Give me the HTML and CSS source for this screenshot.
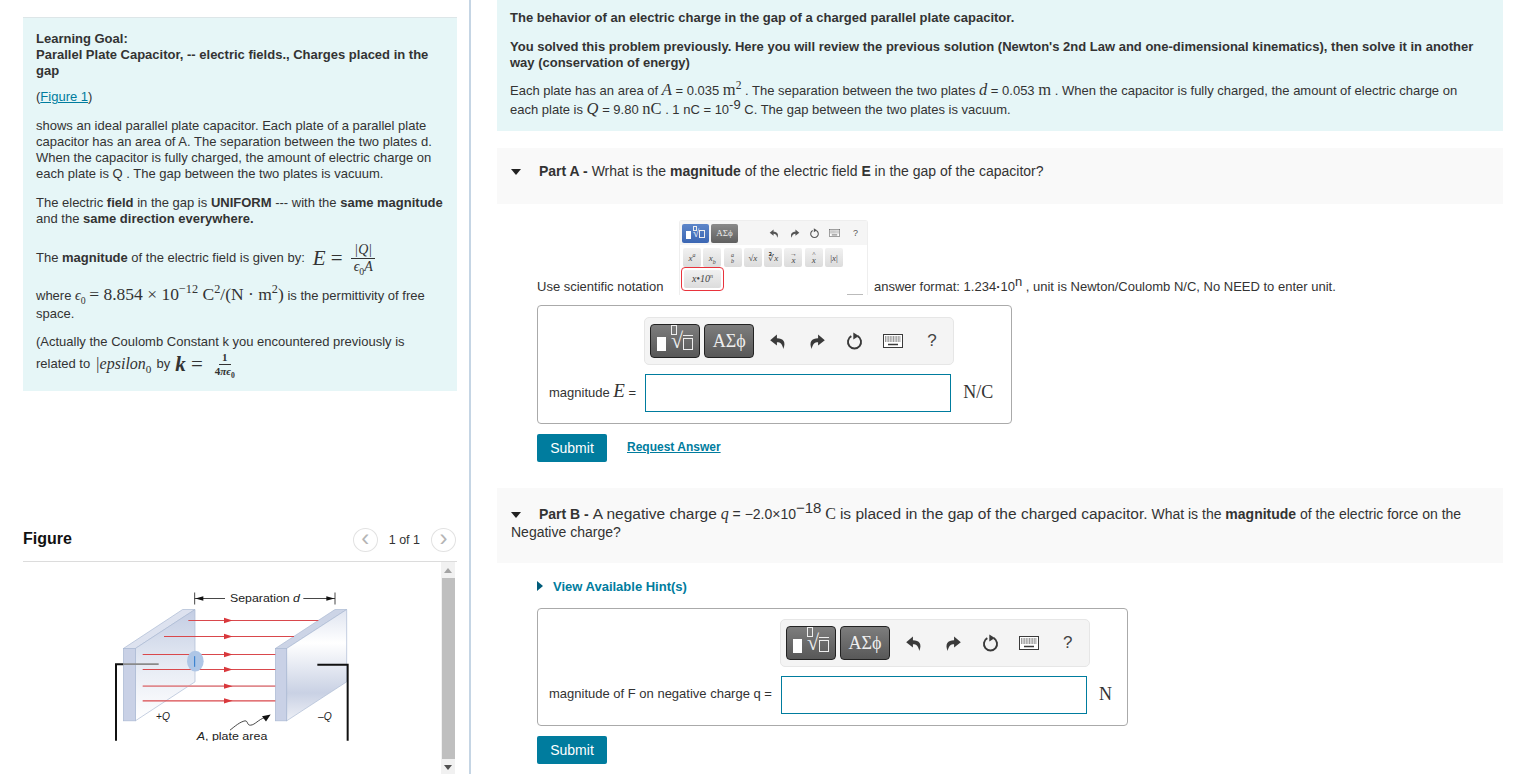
FILE: index.html
```html
<!DOCTYPE html>
<html lang="en">
<head>
    <meta charset="UTF-8" />
    <title>Parallel Plate Capacitor</title>
    <link rel="stylesheet" href="styles.css">
</head>
<body>
    <svg class="defs" width="0" height="0">
        <defs>
            <symbol id="i-undo" viewBox="0 0 24 24"><path d="M10 3 1.500 10.500 10 17V12.800C14.500 12.800 17 15 18 21.500 22 13 18 8 10 8Z"/></symbol>
            <symbol id="i-redo" viewBox="0 0 24 24"><path d="M14 3 22.500 10.500 14 17V12.800C9.500 12.800 7 15 6 21.500 2 13 6 8 14 8Z"/></symbol>
            <symbol id="i-reload" viewBox="0 0 24 24"><path d="M8 5.300A8.300 8.300 0 1 0 16 5.300" fill="none" stroke="currentColor" stroke-width="2.400"/><path d="M10.500 0.500 17.500 5 10.500 9.500Z"/></symbol>
            <symbol id="i-keys" viewBox="0 0 20 14"><rect x="0.500" y="0.500" width="19" height="13" fill="#fff" stroke="currentColor"/><path d="M2 3h16M2 5h16M2 7h16" stroke="currentColor" stroke-dasharray="1 .6"/><path d="M5 10.500h10" stroke="currentColor" stroke-width="1.500"/></symbol>
        </defs>
    </svg>

    <div class="page">
        <div class="left">
            <div class="goal">
                <p class="strong">Learning Goal:<br>Parallel Plate Capacitor, -- electric fields., Charges placed in the gap</p>
                <p class="figlink">(<a href="#">Figure 1</a>)</p>
                <p class="gap-l">shows an ideal parallel plate capacitor. Each plate of a parallel plate capacitor has an area of A. The separation between the two plates d. When the capacitor is fully charged, the amount of electric charge on each plate is Q . The gap between the two plates is vacuum.</p>
                <p class="gap-m">The electric <b>field</b> in the gap is <b>UNIFORM</b> --- with the <b>same magnitude</b> and the <b>same direction everywhere.</b></p>
                <div class="formula">
                    <span>The <b>magnitude</b> of the electric field is given by:</span>
                    <span class="math big"><i>E</i> =</span>
                    <span class="frac"><span class="num"><i>|Q|</i></span><span class="den"><i>ϵ</i><sub>0</sub><i>A</i></span></span>
                </div>
                <p class="where">where <span class="math"><i>ϵ</i><sub>0</sub></span> <span class="math mid">= 8.854 × 10<sup>−12</sup> C<sup>2</sup>/(N · m<sup>2</sup>)</span> is the permittivity of free space.</p>
                <p class="actual">(Actually the Coulomb Constant k you encountered previously is</p>
                <div class="related">
                    <span>related to</span>
                    <span class="math mid"><i>|epsilon</i><sub>0</sub></span>
                    <span>by</span>
                    <span class="math big"><b><i>k</i></b> =</span>
                    <span class="frac small"><span class="num"><b>1</b></span><span class="den"><b>4<i>πϵ</i><sub>0</sub></b></span></span>
                </div>
            </div>

            <div class="fighead">
                <h3>Figure</h3>
                <div class="pager">
                    <span class="circle">‹</span>
                    <span class="count">1 of 1</span>
                    <span class="circle">›</span>
                </div>
            </div>
            <div class="figbody">
                <svg class="capacitor" width="270" height="161" viewBox="0 0 810 482">
                    <defs>
                        <linearGradient id="pl" x1="0" y1="0" x2="0" y2="1">
                            <stop offset="0" stop-color="#c3cde3"/><stop offset=".55" stop-color="#e9edf5"/><stop offset="1" stop-color="#fff"/>
                        </linearGradient>
                        <linearGradient id="pr" x1="0" y1="0" x2="0" y2="1">
                            <stop offset="0" stop-color="#dfe4f0"/><stop offset=".3" stop-color="#fff"/><stop offset=".75" stop-color="#c9d1e4"/><stop offset="1" stop-color="#eef0f6"/>
                        </linearGradient>
                    </defs>
                    <g stroke="#a9b8d2" stroke-width="2">
                        <path d="M70 205 106 205 285 88 248 88Z" fill="#dde2ef"/>
                        <path d="M106 205 285 88V305L106 422Z" fill="url(#pl)"/>
                        <rect x="70" y="205" width="36" height="217" fill="#c9d1e6"/>
                        <path d="M526 205 560 205 740 88 705 88Z" fill="#ccd4e6"/>
                        <path d="M560 205 740 88V305L560 422Z" fill="url(#pr)"/>
                        <rect x="526" y="205" width="34" height="217" fill="#c9d1e6"/>
                    </g>
                    <g stroke="#d9484c" stroke-width="3.500">
                        <path d="M265 121H655M192 169H582M128 223H526M128 268H526M128 362H526"/>
                        <path d="M128 318H526" stroke-width="5" stroke="#e08a8e"/>
                    </g>
                    <g fill="#d9383c">
                        <path d="M372 113 398 121 372 129ZM372 161 398 169 372 177ZM372 215 398 223 372 231ZM372 260 398 268 372 276ZM372 310 398 318 372 326ZM372 354 398 362 372 370Z"/>
                    </g>
                    <ellipse cx="286" cy="243" rx="25" ry="31" fill="#aec6e6"/>
                    <path d="M284 228V260" stroke="#2a78cc" stroke-width="3"/>
                    <g fill="none" stroke="#111" stroke-width="6">
                        <path d="M48 482V252H70"/>
                        <path d="M652 254H743V482"/>
                    </g>
                    <path d="M70 252H176" stroke="#8a8a8a" stroke-width="5"/>
                    <g stroke="#222" stroke-width="2.500" fill="none">
                        <path d="M284 37V73M705 37V73M284 55H375M610 55H705"/>
                        <path d="M390 450C405 438 420 425 435 422 445 422 440 436 452 435 465 434 475 418 495 412"/>
                    </g>
                    <path d="M286 55 310 48V62ZM703 55 679 48V62ZM512 403 486 408 498 424Z" fill="#111"/>
                    <g class="figtext">
                        <text x="390" y="66" textLength="210" lengthAdjust="spacingAndGlyphs">Separation <tspan font-style="italic">d</tspan></text>
                        <text x="168" y="419"><tspan>+</tspan><tspan font-style="italic">Q</tspan></text>
                        <text x="654" y="419">–<tspan font-style="italic">Q</tspan></text>
                        <text x="290" y="480" textLength="212" lengthAdjust="spacingAndGlyphs"><tspan font-style="italic">A</tspan>, plate area</text>
                    </g>
                </svg>
                <div class="scrollbar">
                    <span class="arrow up"></span>
                    <span class="thumb"></span>
                    <span class="arrow down"></span>
                </div>
            </div>
        </div>

        <div class="right">
            <div class="intro">
                <p class="strong">The behavior of an electric charge in the gap of a charged parallel plate capacitor.</p>
                <p class="strong solved">You solved this problem previously. Here you will review the previous solution (Newton's 2nd Law and one-dimensional kinematics), then solve it in another way (conservation of energy)</p>
                <p class="plate">Each plate has an area of <span class="math mid"><i>A</i></span> = 0.035 <span class="math mid">m<sup>2</sup></span> . The separation between the two plates <span class="math mid"><i>d</i></span> = 0.053 <span class="math mid">m</span> . When the capacitor is fully charged, the amount of electric charge on each plate is <span class="math mid"><i>Q</i></span> = 9.80 <span class="math mid">nC</span> . 1 nC = 10<sup class="exp">-9</sup> C. The gap between the two plates is vacuum.</p>
            </div>

            <div class="part part-a">
                <span class="tri"></span><b>Part A -</b> Wrhat is the <b>magnitude</b> of the electric field <b>E</b> in the gap of the capacitor?
            </div>

            <div class="notation">
                <span class="note-l">Use scientific notation</span>
                <div class="mini">
                    <div class="mini-top">
                        <span class="mini-btn blue"><span class="block"></span><span class="root"><span class="index"></span>√<span class="radicand"></span></span></span>
                        <span class="mini-btn">ΑΣϕ</span>
                        <span class="mini-icons">
                            <svg width="11" height="11"><use href="#i-undo"/></svg>
                            <svg width="11" height="11"><use href="#i-redo"/></svg>
                            <svg width="11" height="11"><use href="#i-reload"/></svg>
                            <svg width="11" height="8"><use href="#i-keys"/></svg>
                            <span class="mini-help">?</span>
                        </span>
                    </div>
                    <div class="mini-keys">
                        <span><i>x<sup>a</sup></i></span><span><i>x<sub>b</sub></i></span><span class="stack"><i>a</i><i>b</i></span><span>√<i>x</i></span><span>∛<i>x</i></span><span class="stack accent"><em>→</em><i>x</i></span><span class="stack accent"><em>^</em><i>x</i></span><span>|<i>x</i>|</span>
                    </div>
                    <div class="mini-last"><span><i>x</i>•<i>10<sup>n</sup></i></span></div>
                    <span class="dash"></span>
                </div>
                <span class="note-r">answer format: 1.234<b class="dot">·</b>10<sup class="exp">n</sup> , unit is Newton/Coulomb N/C, No NEED to enter unit.</span>
            </div>

            <div class="answer box-a">
                <div class="toolbar">
                    <span class="tool-btn"><span class="block"></span><span class="root"><span class="index"></span>√<span class="radicand"></span></span></span>
                    <span class="tool-btn greek">ΑΣϕ</span>
                    <span class="tool-icons">
                        <svg width="19" height="19"><use href="#i-undo"/></svg>
                        <svg width="19" height="19"><use href="#i-redo"/></svg>
                        <svg width="19" height="19"><use href="#i-reload"/></svg>
                        <svg width="20" height="14"><use href="#i-keys"/></svg>
                        <span class="help">?</span>
                    </span>
                </div>
                <label class="lbl">magnitude <span class="math e"><i>E</i></span> =</label>
                <span class="field"></span>
                <span class="unit">N/C</span>
            </div>

            <div class="actions">
                <a class="submit" href="#">Submit</a>
                <a class="req" href="#">Request Answer</a>
            </div>

            <div class="part part-b">
                <span class="tri"></span><b>Part B -</b> <span class="larger">A negative charge</span> <span class="math"><i>q</i></span> = −2.0×10<sup class="exp wide">−18</sup> <span class="math wide">C</span> <span class="larger">is placed in the gap of the charged capacitor.</span> What is the <b>magnitude</b> of the electric force on the Negative charge?
            </div>

            <a class="hint" href="#"><span class="tri-r"></span>View Available Hint(s)</a>

            <div class="answer box-b">
                <div class="toolbar">
                    <span class="tool-btn"><span class="block"></span><span class="root"><span class="index"></span>√<span class="radicand"></span></span></span>
                    <span class="tool-btn greek">ΑΣϕ</span>
                    <span class="tool-icons">
                        <svg width="19" height="19"><use href="#i-undo"/></svg>
                        <svg width="19" height="19"><use href="#i-redo"/></svg>
                        <svg width="19" height="19"><use href="#i-reload"/></svg>
                        <svg width="20" height="14"><use href="#i-keys"/></svg>
                        <span class="help">?</span>
                    </span>
                </div>
                <label class="lbl">magnitude of F on negative charge q =</label>
                <span class="field"></span>
                <span class="unit">N</span>
            </div>

            <div class="actions">
                <a class="submit" href="#">Submit</a>
            </div>
        </div>
    </div>
</body>
</html>
```
FILE: styles.css
```css
html, body {
    margin: 0;
    height: 774px;
    overflow: hidden;
    background-color: #fff;
}

body {
    font-family: "Liberation Sans", Arial, sans-serif;
    font-size: 13px;
    line-height: 16px;
    color: #333;
}

p {
    margin: 0;
}

a {
    color: #007c9e;
}

.defs {
    position: absolute;
}

.page {
    display: flex;
    height: 774px;
}

/* left column */
.left {
    width: 434px;
    height: 774px;
    padding-left: 23px;
    padding-right: 12px;
    border-right: 2px solid #c5d5e4;
    overflow: hidden;
    flex-shrink: 0;
}

.goal {
    box-sizing: border-box;
    margin-top: 17px;
    height: 374px;
    padding: 13px 13px 0;
    background-color: #e6f6f7;
    border-top: 1px solid #dde6e8;
}

.strong {
    font-weight: bold;
}

.figlink {
    margin-top: 10px;
}

.gap-l {
    margin-top: 13px;
}

.gap-m {
    margin-top: 13px;
}

.formula {
    display: flex;
    align-items: center;
    gap: 8px;
    margin-top: 14px;
    height: 34px;
}

.where {
    margin-top: 11px;
    line-height: 18px;
}

.where .math.mid {
    font-size: 17.500px;
}

.actual {
    margin-top: 11px;
}

.related {
    display: flex;
    align-items: center;
    gap: 5px;
    height: 28px;
}

.math {
    font-family: "Liberation Serif", "DejaVu Serif", serif;
    font-size: 14px;
    line-height: 1;
}

.math sub, .math sup {
    font-size: 70%;
    line-height: 0;
}

.math.mid {
    font-size: 15px;
}

.math.e {
    font-size: 19px;
}

.related .math.mid {
    font-size: 16px;
}

.math.big {
    font-size: 21px;
}

.frac {
    display: inline-flex;
    flex-direction: column;
    align-items: center;
    font-family: "Liberation Serif", serif;
    font-size: 14px;
    line-height: 16px;
}

.frac.small {
    font-size: 11px;
    line-height: 13px;
    margin-left: 4px;
}

.frac sub {
    font-size: 70%;
    line-height: 0;
}

.num {
    display: block;
    padding: 0 3px;
    border-bottom: 1px solid #333;
}

.den {
    display: block;
    padding: 0 3px;
}

.fighead {
    display: flex;
    justify-content: space-between;
    align-items: center;
    height: 43px;
    margin-top: 127px;
    border-bottom: 1px solid #dcdcdc;
}

.fighead h3 {
    margin: 0 0 2px;
    font-size: 16px;
    color: #111;
}

.pager {
    display: flex;
    align-items: center;
    gap: 11px;
    margin-right: 1px;
}

.count {
    font-size: 12.500px;
}

.circle {
    display: flex;
    align-items: center;
    justify-content: center;
    width: 25px;
    height: 24px;
    border: 1px solid #e2e2e2;
    border-radius: 50%;
    color: #b5b5b5;
    font-size: 24px;
    line-height: 20px;
    padding-bottom: 3px;
    box-sizing: border-box;
}

.figbody {
    display: flex;
    justify-content: space-between;
    height: 213px;
}

.capacitor {
    margin: 18px 0 0 77px;
}

.figtext text {
    font-family: "Liberation Sans", Arial, sans-serif;
    font-size: 31px;
    fill: #222;
}

.scrollbar {
    display: flex;
    flex-direction: column;
    align-items: center;
    width: 14px;
    margin-right: 2px;
    background-color: #f1f1f1;
}

.thumb {
    width: 13px;
    height: 183px;
    background-color: #bfbfbf;
}

.arrow {
    width: 0;
    height: 0;
    margin: 6px 0 5px;
    border-left: 4px solid transparent;
    border-right: 4px solid transparent;
}

.arrow.up {
    border-bottom: 5px solid #a3a3a3;
}

.arrow.down {
    border-top: 5px solid #505050;
}

/* right column */
.right {
    width: 1006px;
    margin-left: 26px;
    flex-shrink: 0;
}

.intro {
    height: 121px;
    padding: 10px 20px 0 13px;
    background-color: #e6f6f7;
}

.solved {
    margin-top: 13px;
}

.plate {
    margin-top: 10px;
    line-height: 19px;
}

.plate .math.mid {
    font-size: 16.500px;
}

.plate sup, .note-r sup {
    line-height: 0;
}

.exp {
    font-size: 13px;
    line-height: 0;
}

.part {
    background-color: #f9f9f9;
    padding: 15px 14px 0;
    font-size: 14px;
}

.part-a {
    margin-top: 17px;
    height: 41px;
}

.part-b {
    margin-top: 26px;
    height: 58px;
    padding-top: 17px;
    line-height: 18px;
}

.larger {
    font-size: 15.500px;
}

.part-b .math {
    font-size: 16px;
}

.part-b .exp {
    font-size: 15px;
}

.tri {
    display: inline-block;
    width: 0;
    height: 0;
    margin-right: 18px;
    vertical-align: 1px;
    border-left: 5px solid transparent;
    border-right: 5px solid transparent;
    border-top: 6px solid #222;
}

.notation {
    display: flex;
    align-items: flex-end;
    height: 75px;
    margin-top: 16px;
    padding-left: 40px;
}

.note-l {
    width: 142px;
}

.note-r {
    margin-left: 6px;
}

.mini {
    position: relative;
    width: 189px;
    height: 75px;
    box-sizing: border-box;
    border: 1px solid #eee;
    border-bottom: 0;
    border-radius: 3px 3px 0 0;
}

.mini-top {
    display: flex;
    align-items: center;
    gap: 2px;
    height: 24px;
    padding-left: 2px;
    background-color: #f5f5f5;
}

.mini-btn {
    display: flex;
    align-items: center;
    justify-content: center;
    width: 27px;
    height: 19px;
    border-radius: 2px;
    background: linear-gradient(#8a8a8a, #5f5f5f);
    color: #eee;
    font-family: "Liberation Serif", serif;
    font-size: 9px;
}

.mini-btn.blue {
    background: linear-gradient(#5d86c9, #3b66b3);
    color: #fff;
    gap: 2px;
}

.mini-btn .block {
    width: 5px;
    height: 8px;
    margin-top: 4px;
    background-color: #fff;
}

.mini-btn .root {
    font-size: 11px;
    line-height: 12px;
    color: #fff;
}

.mini-btn .index {
    width: 2px;
    height: 3px;
    top: -1px;
    left: 0;
}

.mini-btn .radicand {
    width: 4px;
    height: 6px;
    margin-bottom: 1px;
}

.mini-btn .radicand::before {
    display: none;
}

.mini-icons {
    display: flex;
    align-items: center;
    gap: 9px;
    margin-left: 29px;
    color: #555;
    font-size: 9px;
}

.mini-icons svg {
    fill: currentColor;
}

.mini-help {
    margin-left: 4px;
}

.mini-keys {
    display: flex;
    gap: 2.300px;
    padding: 3px 0 0 3px;
}

.mini-keys span, .mini-last span {
    display: flex;
    align-items: center;
    justify-content: center;
    width: 18px;
    height: 19px;
    background: linear-gradient(#f1f1f1, #dcdcdc);
    border-radius: 2px;
    color: #444;
    font-family: "Liberation Serif", serif;
    font-size: 9px;
}

.mini-keys .stack {
    flex-direction: column;
    font-size: 6px;
    line-height: 6px;
}

.mini-keys .accent i {
    font-size: 9px;
    line-height: 8px;
}

.mini-keys .accent em {
    font-style: normal;
    font-size: 7px;
    line-height: 4px;
}

.mini-keys sup, .mini-keys sub, .mini-last sup {
    font-size: 6px;
    line-height: 0;
}

.mini-last {
    width: 43px;
    height: 24px;
    margin-left: 1px;
    box-sizing: border-box;
    border: 1px solid #e8333c;
    border-radius: 4px;
    padding: 2px;
}

.mini-last span {
    width: 37px;
    height: 18px;
    font-size: 10px;
}

.dash {
    position: absolute;
    right: 4px;
    bottom: 0;
    width: 16px;
    border-bottom: 1px solid #bbb;
}

.answer {
    display: grid;
    grid-template-columns: max-content 306px max-content;
    column-gap: 9px;
    row-gap: 9px;
    align-items: center;
    align-content: start;
    box-sizing: border-box;
    margin: 10px 0 0 40px;
    padding: 11px 17px 0 11px;
    border: 1px solid #aaa;
    border-radius: 4px;
}

.box-a {
    width: 475px;
    height: 119px;
}

.box-a .lbl {
    margin-bottom: 4px;
}

.box-b {
    width: 591px;
    height: 118px;
    margin-top: 13px;
    padding-top: 10px;
}

.toolbar {
    grid-column: 2 / 4;
    display: flex;
    align-items: center;
    gap: 4px;
    box-sizing: border-box;
    width: 310px;
    height: 48px;
    margin-left: -1px;
    padding: 0 5px;
    background-color: #f4f4f4;
    border: 1px solid #e6e6e6;
    border-radius: 5px;
}

.tool-btn {
    display: flex;
    align-items: center;
    justify-content: center;
    box-sizing: border-box;
    width: 50px;
    height: 34px;
    border: 1px solid #222;
    border-radius: 4px;
    background: linear-gradient(#7d7d7d, #585858);
    color: #fff;
}

.tool-btn .block {
    width: 9px;
    height: 14px;
    margin: 6px 5px 0 0;
    background-color: #fff;
}

.root {
    display: flex;
    align-items: flex-end;
    position: relative;
    font-family: "Liberation Serif", serif;
    font-size: 22px;
    line-height: 22px;
    color: #eee;
}

.index {
    position: absolute;
    left: 0;
    top: -5px;
    width: 4px;
    height: 8px;
    border: 1px solid #eee;
}

.radicand {
    position: relative;
    width: 8px;
    height: 10px;
    margin-bottom: 2px;
    border: 1px solid #eee;
}

.radicand::before {
    content: "";
    position: absolute;
    left: -1px;
    right: -1px;
    top: -4px;
    border-top: 1px solid #eee;
}

.greek {
    font-family: "Liberation Serif", serif;
    font-size: 18px;
    color: #eee;
}

.tool-icons {
    display: flex;
    align-items: center;
    gap: 19px;
    margin-left: 11px;
    color: #3a3a3a;
}

.tool-icons svg {
    fill: currentColor;
}

.help {
    margin-left: 5px;
    font-size: 17px;
    color: #444;
}

.lbl {
    grid-row: 2;
    grid-column: 1;
    margin-bottom: 2px;
}

.field {
    grid-row: 2;
    grid-column: 2;
    box-sizing: border-box;
    height: 38px;
    border: 1px solid #007c9e;
    background-color: #fff;
}

.unit {
    grid-row: 2;
    grid-column: 3;
    font-family: "Liberation Serif", serif;
    font-size: 18px;
    margin: 0 0 2px 3px;
}

.actions {
    display: flex;
    align-items: center;
    gap: 20px;
    margin: 10px 0 0 40px;
}

.submit {
    box-sizing: border-box;
    width: 70px;
    height: 28px;
    line-height: 28px;
    text-align: center;
    background-color: #007c9e;
    border-radius: 2px;
    color: #fff;
    font-size: 14px;
    text-decoration: none;
}

.req {
    font-size: 12px;
    font-weight: bold;
    margin-bottom: 2px;
}

.hint {
    display: block;
    margin: 16px 0 0 40px;
    font-weight: bold;
    text-decoration: none;
}

.tri-r {
    display: inline-block;
    width: 0;
    height: 0;
    margin-right: 10px;
    border-top: 5px solid transparent;
    border-bottom: 5px solid transparent;
    border-left: 6px solid #005c7a;
}
```
